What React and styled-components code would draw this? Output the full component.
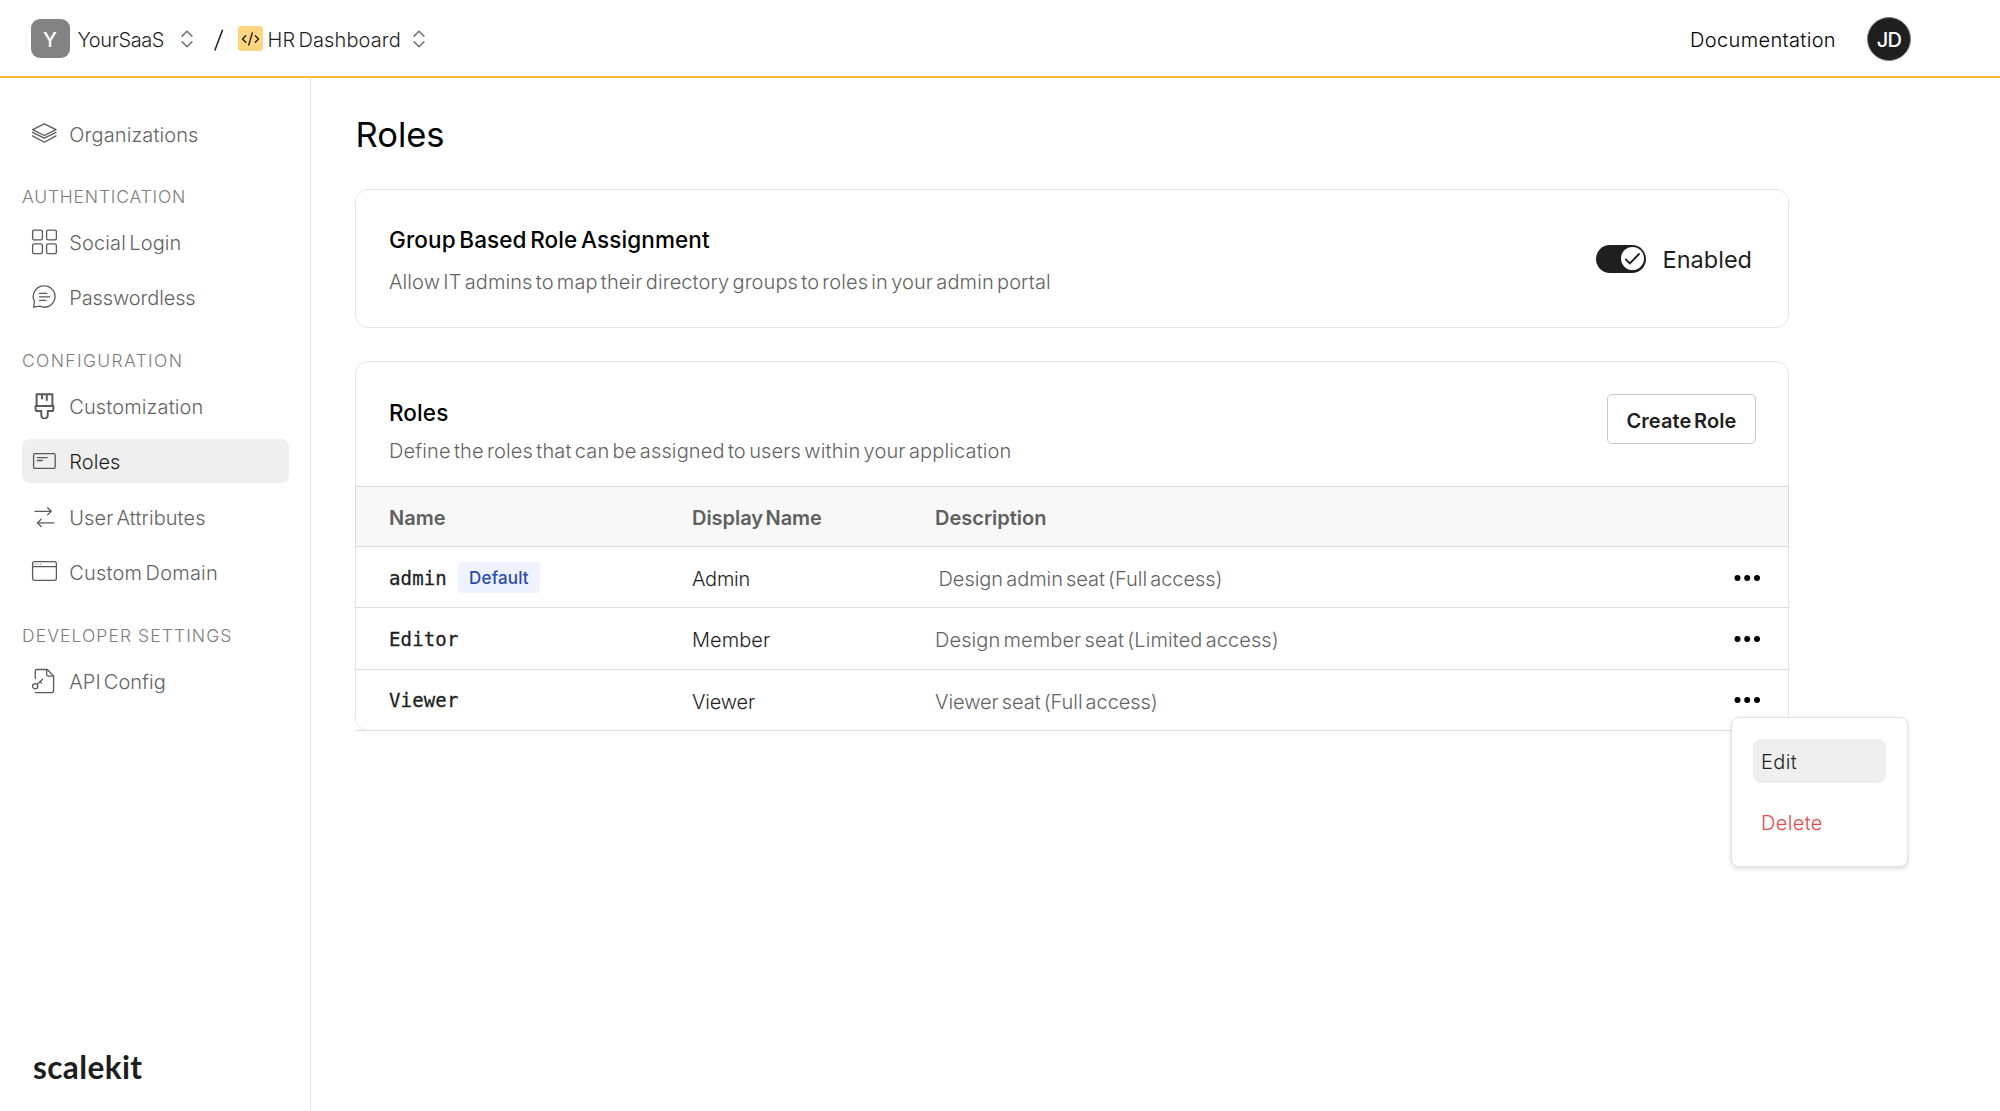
import React from 'react';
import styled, { createGlobalStyle, css } from 'styled-components';

const GlobalStyle = createGlobalStyle`
  *, *::before, *::after { box-sizing: border-box; }
  html, body { margin: 0; padding: 0; background: #fff; }
  body {
    font-family: Inter, "Liberation Sans", sans-serif;
    font-size: 20px;
    font-weight: 320;
    line-height: 24px;
    word-spacing: -2.5px;
    color: #1f1f1f;
    overflow: hidden;
  }
  button { font: inherit; color: inherit; word-spacing: inherit; background: none; border: 0; padding: 0; text-align: left; }
  svg { display: block; flex: none; }
`;

const Page = styled.div`
  display: flex;
  flex-direction: column;
  height: 1111px;
`;

const Header = styled.header`
  display: flex;
  align-items: center;
  justify-content: space-between;
  height: 78px;
  padding: 1px 89px 0 30.5px;
  border-bottom: 2px solid #fbb93a;
  flex: none;
`;

const Crumbs = styled.div`
  display: flex;
  align-items: center;
`;

const OrgTile = styled.span`
  width: 39px;
  height: 39px;
  border-radius: 9px;
  background: #838383;
  color: #fff;
  font-weight: 500;
  font-size: 20px;
  line-height: 42px;
  text-align: center;
`;

const Label = styled.span`
  white-space: nowrap;
  padding-top: 2px;
  letter-spacing: ${(p) => p.$track || 0}px;
`;

const OrgName = styled(Label)`
  margin: 0 15px 0 8px;
  width: 88px;
`;

const Slash = styled.svg`
  margin: 2px 14px 0 21px;
`;

const AppTile = styled.span`
  display: flex;
  align-items: center;
  justify-content: center;
  width: 25px;
  height: 25px;
  border-radius: 3px;
  background: #ffd57f;
`;

const AppName = styled(Label)`
  margin: 0 10px 0 5px;
  width: 135px;
`;

const HeaderRight = styled.div`
  display: flex;
  align-items: center;
  gap: 31px;
  color: #000;
`;

const Avatar = styled.span`
  width: 44px;
  height: 44px;
  border-radius: 50%;
  background: #1f1f1f;
  border: 1px solid #777;
  color: #fff;
  font-weight: 500;
  font-size: 20px;
  line-height: 45px;
  text-align: center;
  letter-spacing: -0.6px;
`;

const Body = styled.div`
  display: flex;
  flex: 1;
  min-height: 0;
`;

const Sidebar = styled.aside`
  display: flex;
  flex-direction: column;
  justify-content: space-between;
  width: 311px;
  padding: 33.5px 21px 26px 22px;
  border-right: 1px solid #e2e2e2;
  flex: none;
`;

const NavGroup = styled.nav`
  display: flex;
  flex-direction: column;
  gap: 11.6px;
`;

const GroupTitle = styled.h2`
  margin: 29.4px 0 10.9px;
  font-size: 17.5px;
  font-weight: 300;
  line-height: 24px;
  color: #7d7d7d;
  white-space: nowrap;
  word-spacing: 0;
  letter-spacing: ${(p) => p.$track}px;
`;

const NavItem = styled.a`
  display: flex;
  align-items: center;
  gap: 12.3px;
  height: 44px;
  padding-left: 9px;
  border-radius: 8px;
  color: #636363;
  ${(p) => p.$active && css`
    background: #efefef;
    color: #1f1f1f;
  `}
`;

const Logo = styled.div`
  padding-left: 11px;
  font-family: Lato, sans-serif;
  font-weight: 700;
  font-size: 31.5px;
  line-height: 36px;
  color: #1e1e1e;
  letter-spacing: ${(p) => p.$track}px;
`;

const Main = styled.main`
  flex: 1;
  padding: 36px 0 0 44px;
  color: #000;
`;

const PageTitle = styled.h1`
  margin: 0 0 33px 0.5px;
  font-size: 34.5px;
  font-weight: 400;
  line-height: 42px;
`;

const Card = styled.section`
  width: 1434px;
  border: 1px solid #e6e6e6;
  border-radius: 13px;
  margin-bottom: 33px;
`;

const CardHead = styled.div`
  display: flex;
  justify-content: space-between;
  align-items: ${(p) => (p.$align)};
  height: ${(p) => p.$height}px;
  padding: ${(p) => p.$pad};
`;

const CardIntro = styled.div`
  padding: ${(p) => p.$top}px 0 0 1px;
`;

const CardTitle = styled.h3`
  margin: 0 0 ${(p) => p.$gap}px;
  font-size: 22.5px;
  font-weight: 500;
  line-height: 28px;
  letter-spacing: ${(p) => p.$track}px;
`;

const CardText = styled.p`
  margin: 0;
  color: #636363;
  letter-spacing: ${(p) => p.$track}px;
`;

const ToggleField = styled.div`
  display: flex;
  align-items: center;
  gap: 17px;
  color: #1f1f1f;
  font-size: 23.5px;
  font-weight: 370;
`;

const Track = styled.span`
  display: flex;
  align-items: center;
  justify-content: flex-end;
  width: 50px;
  height: 28px;
  padding-right: 2px;
  border-radius: 14px;
  background: #1f1f1f;
`;

const Knob = styled.span`
  display: flex;
  align-items: center;
  justify-content: center;
  width: 23px;
  height: 23px;
  border-radius: 50%;
  background: #fff;
`;

const OutlineButton = styled.button`
  width: 149px;
  height: 50px;
  padding-top: 3px;
  border: 1px solid #c9c9c9;
  border-radius: 5px;
  color: #1f1f1f;
  font-weight: 600;
  text-align: center;
  letter-spacing: 0.1px;
`;

const Table = styled.div`
  margin: 0 -1px -1px;
`;

const Row = styled.div`
  position: relative;
  display: grid;
  grid-template-columns: 303px 243px 1fr 27px;
  align-items: center;
  height: 61.4px;
  padding: 1px 28px 0 34px;
  border-bottom: 1px solid #dedede;
`;

const HeadRow = styled(Row)`
  height: 61px;
  padding: 0 27px 0 33px;
  border: 1px solid #dbdbdb;
  background: #f8f8f8;
  color: #5f5f5f;
  font-weight: 600;
`;

const Cell = styled.span`
  padding-top: 2.5px;
  white-space: pre;
  letter-spacing: ${(p) => p.$track || 0}px;
`;

const DisplayCell = styled(Cell)`
  color: #1f1f1f;
`;

const DescriptionCell = styled(Cell)`
  padding-left: ${(p) => p.$indent || 0}px;
  color: #636363;
`;

const NameCell = styled.span`
  display: flex;
  align-items: center;
  gap: 11px;
  font-family: "DejaVu Sans Mono", "Liberation Mono", monospace;
  font-size: 19px;
  font-weight: 400;
  color: #1f1f1f;
  letter-spacing: 0.15px;
  -webkit-text-stroke: 0.3px #1f1f1f;
`;

const Badge = styled.span`
  width: 82px;
  height: 31px;
  border-radius: 4px;
  background: #eff3ff;
  color: #2b49b5;
  font-family: Inter, sans-serif;
  font-size: 17px;
  font-weight: 450;
  line-height: 33.5px;
  text-align: center;
  letter-spacing: 0.15px;
  -webkit-text-stroke: 0;
`;

const Menu = styled.div`
  position: absolute;
  top: 47.4px;
  right: -119px;
  display: flex;
  flex-direction: column;
  gap: 17px;
  width: 177px;
  height: 150px;
  padding: 21px;
  background: #fff;
  border: 1px solid #e2e2e2;
  border-radius: 8px;
  box-shadow: 0 2px 5px rgba(0, 0, 0, 0.14);
`;

const MenuItem = styled.button`
  height: 44px;
  padding: 2px 0 0 8px;
  border-radius: 8px;
  letter-spacing: 0.36px;
  color: ${(p) => (p.$danger ? '#e5484d' : '#1f1f1f')};
  background: ${(p) => (p.$active ? '#efefef' : 'transparent')};
`;

const Icon = ({ children, width = 1.3 }) => (
  <svg width="26" height="26" viewBox="0 0 26 26" fill="none" stroke="#5a5a5a" strokeWidth={width} strokeLinecap="round" strokeLinejoin="round">
    {children}
  </svg>
);

const icons = {
  layers: (
    <Icon>
      <path d="M13.3 2.800 25 8.600 13.3 14.5 1.6 8.600Z" />
      <path d="M1.6 11.4 13.3 17.2 25 11.4" />
      <path d="M1.6 14.900 13.3 21.200 25 14.900" />
    </Icon>
  ),
  grid: (
    <Icon>
      <rect x="1.6" y="1.1" width="9.8" height="9.8" rx="1.6" />
      <rect x="15.6" y="1.1" width="9.8" height="9.8" rx="1.6" />
      <rect x="1.6" y="14.9" width="9.8" height="9.8" rx="1.6" />
      <rect x="15.6" y="14.9" width="9.8" height="9.8" rx="1.6" />
    </Icon>
  ),
  chat: (
    <Icon>
      <path d="M13.4 1.8a10.7 10.7 0 1 1-4.6 20.4L2.6 23.1l.9-5.6A10.7 10.7 0 0 1 13.4 1.8Z" />
      <path d="M8.3 9.3h7.4M8.3 12.8h10.4M8.3 16.3h6.4" />
    </Icon>
  ),
  brush: (
    <Icon width="2">
      <path d="M5.600 12.800V1.300h15.800v11.500M11 1.5v4M15.8 1.5v5.6" />
      <path d="M4.600 12.900h17.800v3.400a1.8 1.8 0 0 1-1.8 1.8h-3.900v4.300a3.200 3.200 0 0 1-6.400 0v-4.300H6.400a1.8 1.8 0 0 1-1.8-1.800Z" />
    </Icon>
  ),
  roles: (
    <Icon>
      <rect x="2.6" y="5.7" width="21.6" height="14.6" rx="1.2" />
      <path d="M6.3 9.6h10M6.300 12.500h5" />
    </Icon>
  ),
  arrows: (
    <Icon>
      <path d="M4 7.300h16.200M16.600 3.700l3.700 3.600-3.700 3.600" />
      <path d="M22.800 18.900H6.500M10.100 15.300l-3.700 3.600 3.700 3.600" />
    </Icon>
  ),
  browser: (
    <Icon>
      <rect x="1.600" y="2.700" width="23.800" height="18.700" rx="2" />
      <path d="M1.600 7.600h23.800" />
      <path strokeWidth="1" d="M4.200 5.200h.1M6.900 5.200h.1M9.600 5.200h.1" />
    </Icon>
  ),
  file: (
    <Icon>
      <path d="M4.300 10.600V3.200A1.700 1.700 0 0 1 6 1.500h10.200L22.600 7.900v14.700a2 2 0 0 1-2 2H4.300" />
      <path d="M15.700 1.700v5a1.500 1.500 0 0 0 1.500 1.500h5.200" />
      <circle cx="4.200" cy="18.200" r="2.600" />
      <path d="M6.100 16.200 11.600 11.200M9.100 13.600l1.500 1.500" />
    </Icon>
  ),
};

const UpDown = () => (
  <svg width="12" height="18" viewBox="0 0 12 18" fill="none" stroke="#666" strokeWidth="1.4" strokeLinecap="round" strokeLinejoin="round">
    <path d="M1 6.300 6 1.300l5 5M1 11.700l5 5 5-5" />
  </svg>
);

const Dots = () => (
  <svg width="27" height="8" viewBox="0 0 27 8" fill="#000">
    <circle cx="3.500" cy="4" r="3" />
    <circle cx="13.200" cy="4" r="3" />
    <circle cx="23" cy="4" r="3" />
  </svg>
);

const nav = [
  { items: [['Organizations', 'layers', 0.1]] },
  { title: 'AUTHENTICATION', track: 0.8, items: [['Social Login', 'grid', 0.12], ['Passwordless', 'chat', -0.13]] },
  {
    title: 'CONFIGURATION',
    track: 1.35,
    items: [
      ['Customization', 'brush', 0.12],
      ['Roles', 'roles', 0.05],
      ['User Attributes', 'arrows', 0.07],
      ['Custom Domain', 'browser', 0.2],
    ],
  },
  { title: 'DEVELOPER SETTINGS', track: 1.08, items: [['API Config', 'file', 0.03]] },
];

const roles = [
  { name: 'admin', badge: 'Default', display: 'Admin', dTrack: -0.25, text: 'Design admin seat (Full access)', track: -0.03, indent: 3.5 },
  { name: 'Editor', display: 'Member', dTrack: 0.05, text: 'Design member seat (Limited access)', track: 0.09 },
  { name: 'Viewer', display: 'Viewer', dTrack: -0.18, text: 'Viewer seat (Full access)', track: -0.06, menu: true },
];

export default function App() {
  return (
    <Page>
      <GlobalStyle />
      <Header>
        <Crumbs>
          <OrgTile>Y</OrgTile>
          <OrgName $track={-0.42}>YourSaaS</OrgName>
          <UpDown />
          <Slash width="10" height="22" viewBox="0 0 10 22" fill="none" stroke="#1f1f1f" strokeWidth="1.500">
            <path d="M.8 21.500 8.600.800" />
          </Slash>
          <AppTile>
            <svg width="19" height="14" viewBox="0 0 19 14" fill="none" stroke="#1f1f1f" strokeWidth="1.400" strokeLinecap="round" strokeLinejoin="round">
              <path d="M4.700 3.800 1.500 7l3.200 3.200M14.300 3.800 17.500 7l-3.200 3.200M11.300 1 7.700 13" />
            </svg>
          </AppTile>
          <AppName $track={0.12}>HR Dashboard</AppName>
          <UpDown />
        </Crumbs>
        <HeaderRight>
          <Label $track={0.35}>Documentation</Label>
          <Avatar>JD</Avatar>
        </HeaderRight>
      </Header>
      <Body>
        <Sidebar>
          <div>
            {nav.map((group, i) => (
              <React.Fragment key={i}>
                {group.title && <GroupTitle $track={group.track}>{group.title}</GroupTitle>}
                <NavGroup>
                  {group.items.map(([text, icon, track]) => (
                    <NavItem key={text} $active={text === 'Roles'}>
                      {icons[icon]}
                      <Label $track={track}>{text}</Label>
                    </NavItem>
                  ))}
                </NavGroup>
              </React.Fragment>
            ))}
          </div>
          <Logo $track={0.4}>scalekit</Logo>
        </Sidebar>
        <Main>
          <PageTitle>Roles</PageTitle>
          <Card>
            <CardHead $height={137} $align="center" $pad="0 36px 0 32px">
              <CardIntro $top={3}>
                <CardTitle $track={0.11} $gap={16}>Group Based Role Assignment</CardTitle>
                <CardText $track={0.1}>Allow IT admins to map their directory groups to roles in your admin portal</CardText>
              </CardIntro>
              <ToggleField>
                <Track>
                  <Knob>
                    <svg width="17" height="13" viewBox="0 0 17 13" fill="none" stroke="#1f1f1f" strokeWidth="1.900">
                      <path d="M1.300 6.800 5.800 11.300 15.500 1.500" />
                    </svg>
                  </Knob>
                </Track>
                <Label>Enabled</Label>
              </ToggleField>
            </CardHead>
          </Card>
          <Card>
            <CardHead $height={124} $align="flex-start" $pad="32px 32px 0 32px">
              <CardIntro $top={5}>
                <CardTitle $track={0.1} $gap={12}>Roles</CardTitle>
                <CardText $track={0.14}>Define the roles that can be assigned to users within your application</CardText>
              </CardIntro>
              <OutlineButton>Create Role</OutlineButton>
            </CardHead>
            <Table>
              <HeadRow>
                <Cell>Name</Cell>
                <Cell $track={-0.04}>Display Name</Cell>
                <Cell $track={0}>Description</Cell>
              </HeadRow>
              {roles.map((r) => (
                <Row key={r.name}>
                  <NameCell>
                    {r.name}
                    {r.badge && <Badge>{r.badge}</Badge>}
                  </NameCell>
                  <DisplayCell $track={r.dTrack}>{r.display}</DisplayCell>
                  <DescriptionCell $track={r.track} $indent={r.indent}>{r.text}</DescriptionCell>
                  <Dots />
                  {r.menu && (
                    <Menu>
                      <MenuItem $active>Edit</MenuItem>
                      <MenuItem $danger>Delete</MenuItem>
                    </Menu>
                  )}
                </Row>
              ))}
            </Table>
          </Card>
        </Main>
      </Body>
    </Page>
  );
}
